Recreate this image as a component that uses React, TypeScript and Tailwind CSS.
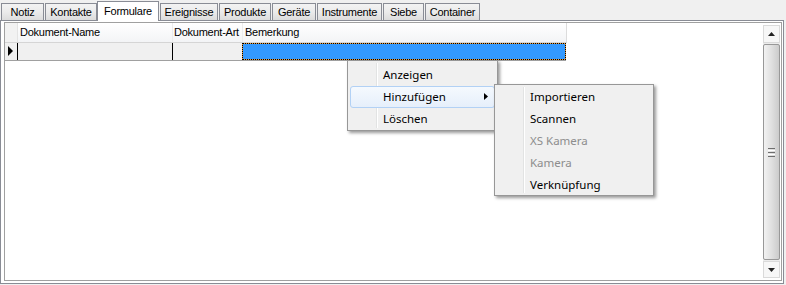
import { ReactNode } from 'react'

const tabs = [
    { label: 'Notiz', w: 43, ml: 1 },
    { label: 'Kontakte', w: 52, ml: 1 },
    { label: 'Formulare', w: 62, ml: 0, active: true },
    { label: 'Ereignisse', w: 58, ml: 1 },
    { label: 'Produkte', w: 52, ml: 1 },
    { label: 'Geräte', w: 44, ml: 1 },
    { label: 'Instrumente', w: 65, ml: 1 },
    { label: 'Siebe', w: 41, ml: 1 },
    { label: 'Container', w: 55, ml: 1 },
]

function MenuItem({ children, disabled, hot, arrow }: { children: ReactNode; disabled?: boolean; hot?: boolean; arrow?: boolean }) {
    return (
        <div className="relative h-[22px] flex items-center">
            {hot && (
                <div className="absolute left-[2px] right-[2px] top-0 bottom-0 rounded-[3px] border border-[#b2d1f5] bg-gradient-to-b from-[#f5f9fe] to-[#e6effb]" />
            )}
            <span className={`relative pl-[35px] whitespace-nowrap ${disabled ? 'text-[#8d8d8d]' : 'text-black'}`}>{children}</span>
            {arrow && (
                <svg className="absolute left-[136px] top-[7px]" width="4" height="7" viewBox="0 0 4 7">
                    <polygon points="0,0 4,3.5 0,7" fill="#000" />
                </svg>
            )}
        </div>
    )
}

export default function App() {
    return (
        <div className="w-[786px] h-[285px] bg-[#f0f0f0] relative overflow-hidden text-[11px] tracking-[-0.25px] text-black" style={{ fontFamily: '"Liberation Sans", Arial, sans-serif' }}>
            {/* Tabs */}
            <div className="flex h-[20px] items-start">
                {tabs.map(t => (
                    <div
                        key={t.label}
                        className={
                            t.active
                                ? 'relative z-10 mt-[1px] h-[20px] bg-white border border-b-0 border-[#898c95] flex items-center justify-center pb-[1px] whitespace-nowrap'
                                : 'mt-[3px] h-[17px] border border-b-0 border-[#898c95] bg-gradient-to-b from-[#f3f3f3] via-[#ebebeb] to-[#dcdcdc] flex items-center justify-center whitespace-nowrap'
                        }
                        style={{ width: t.w, marginLeft: t.ml }}
                    >
                        {t.label}
                    </div>
                ))}
            </div>

            {/* Panel */}
            <div className="w-[784px] h-[264px] bg-white border border-[#898c95] pl-[3px] pr-[1px] pt-[1px]">
                <div className="h-[259px] border border-[#a0a0a0] flex">
                    {/* table */}
                    <div className="flex-1">
                        <div className="flex h-[20px] w-[562px] border-b border-[#d5d5d5] bg-gradient-to-b from-white to-[#f3f4f6] whitespace-nowrap">
                            <div className="w-[13px] bg-[#f2f2f2] border-r border-[#e3e3e3]" />
                            <div className="w-[155px] pl-[2px] flex items-center border-r border-[#ececec] overflow-hidden">Dokument-Name</div>
                            <div className="w-[70px] pl-[1px] flex items-center border-r border-[#ececec] overflow-hidden">Dokument-Art</div>
                            <div className="w-[324px] pl-[2px] flex items-center border-r border-[#dcdcdc]">Bemerkung</div>
                        </div>
                        <div className="flex h-[18px] w-[561px] border-b border-[#a0a0a0] bg-[#f0f0f0]">
                            <div className="w-[13px] border-r border-black relative">
                                <svg className="absolute left-[3px] top-[3px]" width="5" height="10" viewBox="0 0 5 10">
                                    <polygon points="0,0 5,5 0,10" fill="#000" />
                                </svg>
                            </div>
                            <div className="w-[155px] border-r border-black" />
                            <div className="w-[69px]" />
                            <div className="w-[324px] bg-[#e89a3c]">
                                <div className="h-full border border-dotted border-black bg-[#3399ff] bg-clip-padding" />
                            </div>
                        </div>
                    </div>
                    {/* scrollbar */}
                    <div className="w-[17px] mr-[1px] py-[2px] flex flex-col">
                        <div className="h-[18px] border border-[#dadada] bg-[#f7f7f7] flex items-center justify-center">
                            <svg width="7" height="4" viewBox="0 0 7 4"><polygon points="0,4 3.5,0 7,4" fill="#222" /></svg>
                        </div>
                        <div className="flex-1 bg-[#ececec] py-[1px]">
                            <div className="h-full border border-[#989898] rounded-[2px] bg-gradient-to-r from-[#f2f2f2] via-[#e0e0e0] to-[#cbcbcb] flex flex-col items-center justify-center gap-[1px]">
                                <div className="w-[7px] h-[1px] bg-[#6e6e6e]" />
                                <div className="w-[7px] h-[1px] bg-white" />
                                <div className="w-[7px] h-[1px] bg-[#6e6e6e]" />
                                <div className="w-[7px] h-[1px] bg-white" />
                                <div className="w-[7px] h-[1px] bg-[#6e6e6e]" />
                            </div>
                        </div>
                        <div className="h-[17px] border border-[#dadada] bg-[#f7f7f7] flex items-center justify-center">
                            <svg width="7" height="4" viewBox="0 0 7 4"><polygon points="0,0 7,0 3.5,4" fill="#222" /></svg>
                        </div>
                    </div>
                </div>
            </div>

            {/* Context menu */}
            <div
                className="absolute left-[347px] top-[60px] w-[151px] h-[71px] bg-[#f0f0f0] border border-[#979797] shadow-[2px_2px_3px_rgba(0,0,0,0.4)] pt-[3px] text-[11.5px] tracking-normal"
                style={{ fontFamily: '"Noto Sans", "Open Sans", sans-serif' }}
            >
                <div className="absolute left-[28px] top-[2px] bottom-[2px] w-[2px] border-l border-[#e2e3e3] bg-white" />
                <MenuItem>Anzeigen</MenuItem>
                <MenuItem hot arrow>Hinzufügen</MenuItem>
                <MenuItem>Löschen</MenuItem>
            </div>

            {/* Submenu */}
            <div
                className="absolute left-[494px] top-[84px] w-[160px] h-[112px] bg-[#f0f0f0] border border-[#979797] shadow-[2px_2px_3px_rgba(0,0,0,0.4)] pt-[1px] text-[11.5px] tracking-normal"
                style={{ fontFamily: '"Noto Sans", "Open Sans", sans-serif' }}
            >
                <div className="absolute left-[28px] top-[2px] bottom-[2px] w-[2px] border-l border-[#e2e3e3] bg-white" />
                <MenuItem>Importieren</MenuItem>
                <MenuItem>Scannen</MenuItem>
                <MenuItem disabled>XS Kamera</MenuItem>
                <MenuItem disabled>Kamera</MenuItem>
                <MenuItem>Verknüpfung</MenuItem>
            </div>
        </div>
    )
}
